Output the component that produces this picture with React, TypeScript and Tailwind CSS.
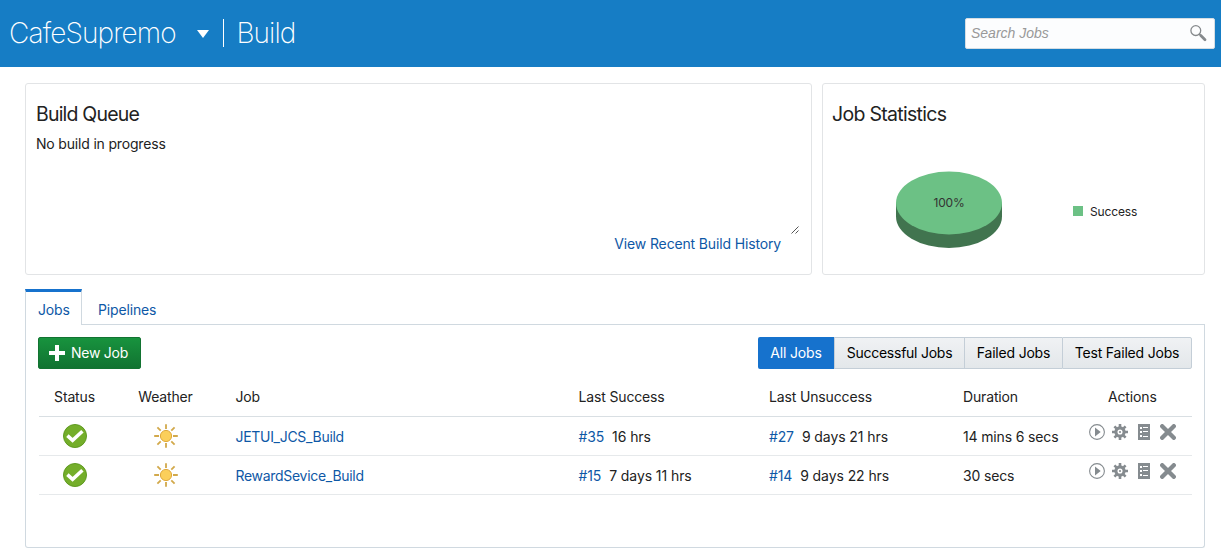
import React from "react";

type Job = {
  name: string;
  success: [string, string];
  failure: [string, string];
  duration: string;
};

const jobs: Job[] = [
  { name: "JETUI_JCS_Build", success: ["#35", "16 hrs"], failure: ["#27", "9 days 21 hrs"], duration: "14 mins 6 secs" },
  { name: "RewardSevice_Build", success: ["#15", "7 days 11 hrs"], failure: ["#14", "9 days 22 hrs"], duration: "30 secs" },
];

const rowGrid = "grid grid-cols-[72px_110px_14.5px_343px_190.5px_194px_126px_103px]";

function SearchIcon() {
  return (
    <svg width="18" height="18" viewBox="0 0 18 18" fill="none" stroke="#85898c">
      <circle cx="6.8" cy="6.6" r="4.9" strokeWidth="1.3" />
      <path d="M10.2 10L12 11.8" strokeWidth="1.4" />
      <path d="M11.8 11.6L16 15.8" strokeWidth="2.8" strokeLinecap="round" />
    </svg>
  );
}

function StatusIcon() {
  return (
    <svg width="24" height="24" viewBox="0 0 24 24">
      <circle cx="12" cy="12" r="11.5" fill="#74ae2a" stroke="#5f9a21" />
      <path d="M4.4 11.6L9.6 16.4L19.4 7.2" fill="none" stroke="#fff" strokeWidth="3.5" />
    </svg>
  );
}

function SunIcon() {
  return (
    <svg width="24" height="24" viewBox="0 0 24 24">
      <path
        d="M12 .2V5M12 19V23.8M.2 12H5M19 12H23.8M3.4 3.4L6.7 6.7M17.3 17.3L20.6 20.6M3.4 20.6L6.7 17.3M17.3 6.7L20.6 3.4"
        stroke="#d2a94b"
        strokeWidth="1.8"
      />
      <circle cx="12" cy="12" r="5.6" fill="#fbcf5b" stroke="#dfa93c" strokeWidth="1" />
    </svg>
  );
}

function PlayIcon() {
  return (
    <svg width="16" height="16" viewBox="0 0 16 16">
      <circle cx="8" cy="8" r="7.4" fill="none" stroke="#858b8f" strokeWidth="1.1" />
      <path d="M6 3.6L11.7 8L6 12.4Z" fill="#858b8f" />
    </svg>
  );
}

function GearIcon() {
  return (
    <svg width="16" height="16" viewBox="0 0 16 16" fill="none" stroke="#858b8f">
      <circle cx="8" cy="8" r="4.1" strokeWidth="3.1" />
      <path
        d="M8 0V3M8 13V16M0 8H3M13 8H16M2.4 2.4L4.4 4.4M11.6 11.6L13.6 13.6M2.4 13.6L4.4 11.6M11.6 4.4L13.6 2.4"
        strokeWidth="2.6"
      />
      <circle cx="8" cy="8" r="1.1" fill="#858b8f" stroke="none" />
    </svg>
  );
}

function LogIcon() {
  return (
    <svg width="12" height="16" viewBox="0 0 12 16">
      <rect width="12" height="16" fill="#858b8f" />
      <path d="M2 4H4M2 8H4M2 12H4" stroke="#fff" strokeWidth="2" />
      <path d="M5 3.5H10M5 7.5H10M5 12.5H10" stroke="#fff" strokeWidth="1" />
    </svg>
  );
}

function DeleteIcon() {
  return (
    <svg width="16" height="16" viewBox="0 0 16 16">
      <path d="M2.2 2.2L13.8 13.8M13.8 2.2L2.2 13.8" stroke="#858b8f" strokeWidth="4.3" strokeLinecap="round" />
    </svg>
  );
}

function PieChart() {
  return (
    <svg width="108" height="80" viewBox="0 0 108 80">
      <path d="M1 32V45.5A53 31.5 0 0 0 107 45.5V32Z" fill="#41744f" />
      <ellipse cx="54" cy="32" rx="53" ry="31.5" fill="#6cc185" />
      <text x="54" y="36" textAnchor="middle" fontSize="12" fill="#333" fontFamily="Inter, sans-serif" letterSpacing="-0.2">
        100%
      </text>
    </svg>
  );
}

function BuildLink({ build, age }: { build: string; age: string }) {
  return (
    <div className="flex gap-2 pt-[10px] whitespace-nowrap">
      <a className="text-[#0e58a6]">{build}</a>
      <span className="tracking-[-0.08px]">{age}</span>
    </div>
  );
}

function JobRow({ job }: { job: Job }) {
  return (
    <div className={`${rowGrid} h-[39px] border-b border-[#e6e9eb] leading-5`}>
      <div className="flex justify-center pt-[7px]"><StatusIcon /></div>
      <div className="flex justify-center pt-[7px]"><SunIcon /></div>
      <span />
      <a className="pt-[10px] tracking-[-0.3px] text-[#0e58a6]">{job.name}</a>
      <BuildLink build={job.success[0]} age={job.success[1]} />
      <BuildLink build={job.failure[0]} age={job.failure[1]} />
      <span className="pt-[10px]">{job.duration}</span>
      <div className="flex items-start pt-[7px]">
        <PlayIcon />
        <span className="ml-[7px]"><GearIcon /></span>
        <span className="ml-[10px]"><LogIcon /></span>
        <span className="ml-[10px]"><DeleteIcon /></span>
      </div>
    </div>
  );
}

export default function App() {
  return (
    <div className="h-[555px] w-[1221px] overflow-hidden bg-white font-['Inter',sans-serif] text-[14px] tracking-[-0.15px] text-[#222]">
      <header className="flex h-[67px] items-start bg-[#167dc5] text-white">
        <span className="w-[186px] pt-[13px] pl-[9px] text-[28px] leading-10 font-extralight tracking-[-0.85px]">CafeSupremo</span>
        <svg className="mt-[30px] ml-[11px]" width="12" height="8" viewBox="0 0 12 8"><path d="M0 0H12L6 8Z" fill="#fff" /></svg>
        <span className="mt-[19px] ml-[14px] h-7 w-px bg-white" />
        <span className="pt-[13px] pl-[12.5px] text-[28px] leading-10 font-extralight tracking-[-0.95px]">Build</span>
        <div className="mt-[18px] mr-[6px] ml-auto flex h-[31px] w-[250px] items-center justify-between rounded-xs border border-[#d5dde3] bg-[#fcfdfe] pr-[7px] pl-[5px]">
          <span className="font-['Liberation_Sans',sans-serif] text-[14px] tracking-normal text-[#999] italic">Search Jobs</span>
          <div className="pb-0.5"><SearchIcon /></div>
        </div>
      </header>

      <div className="mt-4 ml-[25px] flex gap-[10px]">
        <section className="h-[192px] w-[787px] rounded-[3px] border border-[#e2e4e6] px-[10px] pt-[18px]">
          <h2 className="text-[19.5px] leading-6 tracking-[-0.8px]">Build Queue</h2>
          <p className="mt-2 leading-5 tracking-[-0.18px]">No build in progress</p>
          <div className="mt-[72px] flex h-2 justify-end pr-[2px]">
            <svg width="8" height="8" viewBox="0 0 8 8"><path d="M.5 7.5L7.5 .5M4.5 7.5L7.5 4.5" stroke="#555" /></svg>
          </div>
          <div className="flex justify-end pr-[20px] leading-5"><a className="text-[#0e58a6]">View Recent Build History</a></div>
        </section>
        <section className="h-[192px] w-[383px] rounded-[3px] border border-[#e2e4e6] pt-[18px]">
          <h2 className="pl-[9px] text-[19.5px] leading-6 tracking-[-0.7px]">Job Statistics</h2>
          <div className="mt-[45px] flex pl-[72px]">
            <PieChart />
            <div className="mt-[32px] ml-[70px] flex h-4 items-center text-[12px]">
              <span className="mr-[7px] size-[10px] bg-[#6cc185]" />
              <span className="pt-px">Success</span>
            </div>
          </div>
        </section>
      </div>

      <div className="mt-[14px] ml-[25px] w-[1180px]">
        <div className="flex h-9 text-[#0e58a6]">
          <div className="w-[57px] border-x border-t-[3px] border-x-[#d0d9e0] border-t-[#1672cd] pt-2 pl-3 leading-5">Jobs</div>
          <div className="flex-1 border-b border-[#d0d9e0] pt-[11px] pl-4 leading-5">Pipelines</div>
        </div>
        <section className="h-[223px] rounded-b-[3px] border-x border-b border-[#d0d9e0] px-3 pt-3">
          <div className="flex h-8 justify-between">
            <button className="flex w-[103px] items-center rounded-xs border border-[#127331] bg-linear-to-b from-[#18933e] to-[#117331] pl-[10px] text-white">
              <svg width="16" height="16" viewBox="0 0 16 16"><path d="M8 0V16M0 8H16" stroke="#fff" strokeWidth="4" /></svg>
              <span className="pb-px pl-[6px] tracking-[-0.25px]">New Job</span>
            </button>
            <div className="flex rounded-xs text-black">
              <button className="w-[76px] rounded-l-xs bg-[#1672cd] pb-px text-white">All Jobs</button>
              <button className="w-[130px] border border-r-0 border-[#c4ced7] bg-linear-to-b from-[#f0f2f4] to-[#e3e7ea] pb-px tracking-[-0.25px]">Successful Jobs</button>
              <button className="w-[98px] border border-r-0 border-[#c4ced7] bg-linear-to-b from-[#f0f2f4] to-[#e3e7ea] pb-px tracking-[-0.2px]">Failed Jobs</button>
              <button className="w-[130px] rounded-r-xs border border-[#c4ced7] bg-linear-to-b from-[#f0f2f4] to-[#e3e7ea] pb-px tracking-[-0.2px]">Test Failed Jobs</button>
            </div>
          </div>
          <div className="ml-px w-[1153px]">
            <div className={`${rowGrid} h-12 border-b border-[#d9dfe3] pt-[18px] leading-5`}>
              <span className="pr-px text-center">Status</span>
              <span className="pr-px text-center">Weather</span>
              <span />
              <span>Job</span>
              <span>Last Success</span>
              <span>Last Unsuccess</span>
              <span>Duration</span>
              <span className="pl-[19px]">Actions</span>
            </div>
            {jobs.map((job) => <JobRow key={job.name} job={job} />)}
          </div>
        </section>
      </div>
    </div>
  );
}
